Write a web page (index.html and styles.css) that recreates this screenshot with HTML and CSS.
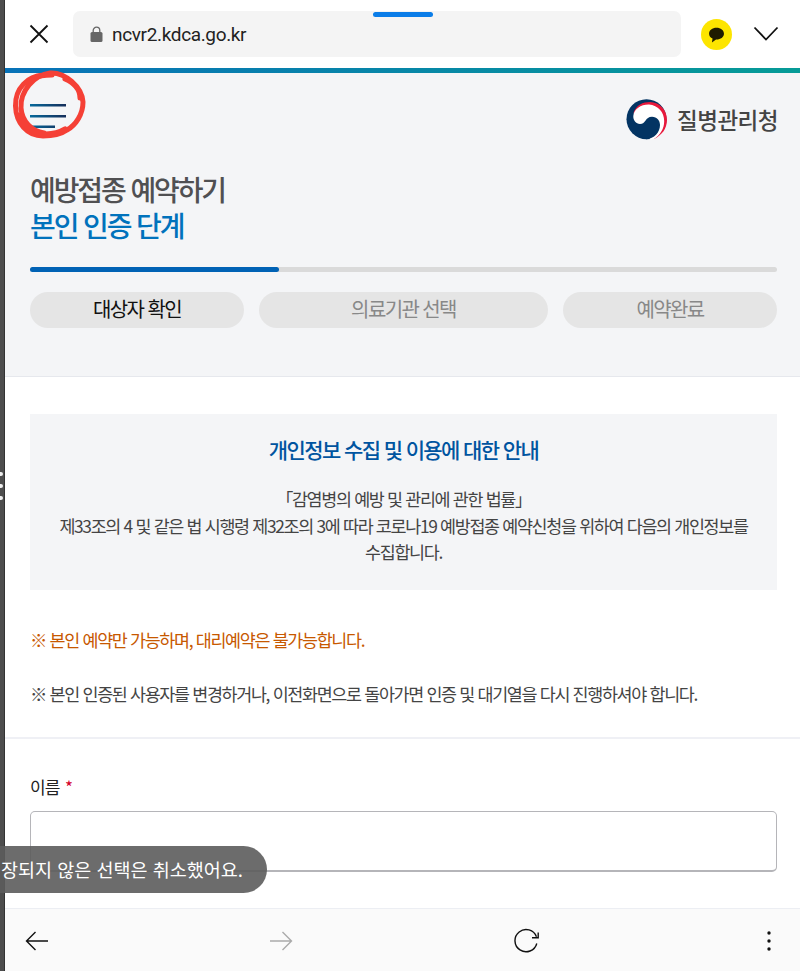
FILE: index.html
```
<!DOCTYPE html>
<html lang="ko">
<head>
    <meta charset="UTF-8">
    <meta name="viewport" content="width=device-width, initial-scale=1.0">
    <title>예방접종 예약하기</title>
    <link rel="stylesheet" href="styles.css">
</head>
<body>
    <div class="split-handle">
        <span></span>
        <span></span>
        <span></span>
    </div>

    <div class="browser">
        <header class="address-bar">
            <div class="sheet-handle"></div>
            <svg class="icon-close" width="20" height="20" viewBox="0 0 20 20"><path d="M1.5 1.5L18.5 18.5M18.5 1.5L1.5 18.5"/></svg>
            <div class="url">
                <svg width="13" height="17" viewBox="0 0 13 17">
                    <path d="M3.2 7V4.5a3.300 3.300 0 0 1 6.600 0V7" fill="none" stroke="#666" stroke-width="1.3"/>
                    <rect x="0.5" y="6" width="12" height="10" rx="1.5" fill="#666"/>
                </svg>
                <span>ncvr2.kdca.go.kr</span>
            </div>
            <svg class="icon-talk" width="31" height="31" viewBox="0 0 32 32">
                <circle cx="16" cy="16" r="16" fill="#fde500"/>
                <path d="M16 9c-4.300 0-7.700 2.700-7.700 6.100 0 2.200 1.500 4.100 3.600 5.100l-.6 4 4.200-3.100c4.500.2 8.200-2.500 8.200-6 0-3.400-3.400-6.100-7.700-6.100z" fill="#1f1b00"/>
            </svg>
            <svg class="icon-down" width="26" height="16" viewBox="0 0 26 16"><path d="M1.5 1.5L13 13.5L24.5 1.5"/></svg>
        </header>

        <section class="page-head">
            <div class="brand-row">
                <svg class="menu" width="38" height="26" viewBox="0 0 38 26">
                    <defs>
                        <linearGradient id="menuLine" gradientUnits="userSpaceOnUse" x1="0" y1="0" x2="37" y2="0">
                            <stop offset="0" stop-color="#07699b"/>
                            <stop offset="1" stop-color="#152c58"/>
                        </linearGradient>
                    </defs>
                    <path d="M0 2h36v2.400H0zM0 13h36v2.400H0zM0 23.600h25v2.400H0z" fill="url(#menuLine)"/>
                </svg>
                <div class="brand">
                    <svg width="42" height="41" viewBox="0 0 42 41">
                        <circle cx="20.5" cy="20.2" r="20" fill="#033463"/>
                        <path d="M7.500 14C10 6 17 3 24 3C34 3.500 41 11 41 21C40.700 30 36 36 28 40L20 28z" fill="#e8193c"/>
                        <path d="M7.300 17C8 10 15 5.300 23 5.500C32 6.300 38.200 13 38.200 22C38.200 30 34 36 28 40L24 40.500L20 30L14 25C10 25 7 21 7.300 17z" fill="#fff"/>
                        <path d="M14 25C20 25 19 17.700 26 17.700C31 17.700 34 21.500 34 26C34 33.500 28 39.600 20.500 40.200L10 34z" fill="#033463"/>
                    </svg>
                    <span>질병관리청</span>
                </div>
            </div>

            <h1>예방접종 예약하기<br><em>본인 인증 단계</em></h1>

            <div class="progress"><div class="progress-fill"></div></div>
            <ol class="steps">
                <li class="active">대상자 확인</li>
                <li>의료기관 선택</li>
                <li>예약완료</li>
            </ol>
        </section>

        <section class="notice">
            <div class="notice-box">
                <h2>개인정보 수집 및 이용에 대한 안내</h2>
                <p>「감염병의 예방 및 관리에 관한 법률」<br>제33조의 4 및 같은 법 시행령 제32조의 3에 따라 코로나19 예방접종 예약신청을 위하여 다음의 개인정보를<br>수집합니다.</p>
            </div>
            <p class="warning">※ 본인 예약만 가능하며, 대리예약은 불가능합니다.</p>
            <p>※ 본인 인증된 사용자를 변경하거나, 이전화면으로 돌아가면 인증 및 대기열을 다시 진행하셔야 합니다.</p>
        </section>

        <form class="form">
            <label for="name">이름 <span>*</span></label>
            <input type="text" id="name">
        </form>

        <nav class="toolbar">
            <svg width="24" height="20" viewBox="0 0 24 20"><path d="M23 10H1.500M10.500 1L1.500 10L10.500 19"/></svg>
            <svg class="disabled" width="24" height="20" viewBox="0 0 24 20"><path d="M1 10H22.500M13.500 1L22.500 10L13.500 19"/></svg>
            <svg width="26" height="26" viewBox="0 0 26 26"><path d="M22.800 15.500A11.100 11.100 0 1 1 22.500 8.800M24.200 4.500V9.800H18"/></svg>
            <svg width="18" height="20" viewBox="0 0 18 20" class="more"><circle cx="9" cy="2" r="1.700"/><circle cx="9" cy="10" r="1.700"/><circle cx="9" cy="18" r="1.700"/></svg>
        </nav>
    </div>

    <!-- hand-drawn mark around the menu button -->
    <svg class="marker" width="80" height="75" viewBox="10 68 80 75">
        <path d="M43 75C28 76 15 88 15.500 106C16 123 27 136 43 136C50 136 60 135 67 130C76 125 83 114 83 102C82 87 65 72 50 73C34 75 20 91 21 108C22 122 32 131 44 133"/>
        <path d="M80 98C80 90 74 83 65 79M19 115C25 129 34 134 46 134C54 134 60 132 65 129M34 78C40 75 46 75 52 75"/>
    </svg>

    <div class="toast">장되지 않은 선택은 취소했어요.</div>
</body>
</html>
```
FILE: styles.css
```
* {
    box-sizing: border-box;
}
body {
    margin: 0;
    height: 971px;
    display: flex;
    position: relative;
    overflow: hidden;
    background-color: #fff;
    color: #444;
    font-family: "Noto Sans CJK KR", sans-serif;
}
h1, h2, p, ol {
    margin: 0;
    padding: 0;
}
svg {
    display: block;
    flex: none;
}
.split-handle {
    width: 5px;
    flex: none;
    background-color: #4d4d4d;
    border-right: 1px solid #333;
    display: flex;
    flex-direction: column;
    justify-content: center;
    gap: 8px;
}
.split-handle span {
    width: 3px;
    height: 4px;
    border-radius: 0 2px 2px 0;
    background-color: #eee;
}
.browser {
    flex: 1;
    min-width: 0;
    display: flex;
    flex-direction: column;
}

/* address bar */
.address-bar {
    position: relative;
    height: 68px;
    flex: none;
    display: flex;
    align-items: center;
    padding: 0 21px 0 24px;
}
.sheet-handle {
    position: absolute;
    top: 12px;
    left: 368px;
    width: 60px;
    height: 5px;
    border-radius: 3px;
    background-color: #0b7de8;
}
.icon-close, .icon-down {
    fill: none;
    stroke: #111;
    stroke-width: 1.8;
}
.url {
    flex: 1;
    height: 46px;
    margin: 0 20px 0 24px;
    padding-left: 17px;
    display: flex;
    align-items: center;
    gap: 9px;
    border-radius: 7px;
    background-color: #f4f4f4;
    color: #222;
    font-family: Roboto, sans-serif;
    font-size: 19px;
    letter-spacing: -0.35px;
}
.icon-talk {
    margin-right: 21px;
}

/* page header */
.page-head {
    position: relative;
    height: 309px;
    flex: none;
    padding: 26px 23px 0 25px;
    background-color: #f4f5f7;
    border-bottom: 1px solid #e6e8ed;
}
.page-head::before {
    content: "";
    position: absolute;
    top: 0;
    left: 0;
    width: 100%;
    height: 5px;
    background: linear-gradient(to right, #0872b8, #069b97);
}
.brand-row {
    display: flex;
    justify-content: space-between;
    height: 77px;
}
.menu {
    margin-top: 8px;
}
.brand {
    display: flex;
    align-items: center;
    gap: 9px;
    height: 50px;
    font-size: 22.5px;
    font-weight: 500;
    letter-spacing: -0.5px;
}
.brand span {
    margin-right: -1px;
    padding-bottom: 1px;
}
h1 {
    font-size: 28px;
    font-weight: 500;
    line-height: 36px;
    letter-spacing: -2.1px;
    color: #505052;
}
h1 em {
    font-style: normal;
    color: #0072bc;
}
.progress {
    height: 5px;
    margin-top: 24px;
    border-radius: 3px;
    background-color: #dadada;
}
.progress-fill {
    width: 249px;
    height: 5px;
    border-radius: 3px;
    background-color: #0062b5;
}
.steps {
    list-style: none;
    display: flex;
    gap: 15px;
    margin-top: 20px;
}
.steps li {
    width: 214px;
    height: 36px;
    border-radius: 18px;
    background-color: #e5e5e5;
    color: #888;
    font-size: 20px;
    line-height: 34px;
    letter-spacing: -1.6px;
    text-align: center;
}
.steps li:nth-child(2) {
    flex: 1;
}
.steps .active {
    color: #111;
}

/* notice */
.notice {
    height: 362px;
    flex: none;
    padding: 37px 23px 0 25px;
    border-bottom: 2px solid #eff0f5;
    font-size: 17.4px;
    line-height: 26.5px;
    letter-spacing: -1.33px;
}
.notice-box {
    height: 176px;
    margin-bottom: 37px;
    padding-top: 20px;
    background-color: #f4f5f7;
    text-align: center;
}
.notice-box h2 {
    margin-bottom: 22px;
    color: #0054a0;
    font-size: 21px;
    font-weight: 500;
    line-height: 30px;
    letter-spacing: -1.6px;
}
.notice-box p {
    white-space: nowrap;
}
.notice .warning {
    margin-bottom: 27px;
    color: #c75800;
}

/* form */
.form {
    flex: 1;
    padding: 35px 23px 0 25px;
}
.form label {
    display: block;
    height: 37px;
    color: #222;
    font-size: 17px;
    line-height: 26px;
    letter-spacing: -1px;
}
.form label span {
    margin-left: 2px;
    color: #d4002a;
}
.form input {
    display: block;
    width: 100%;
    height: 61px;
    border: 1px solid #b5b5b9;
    border-bottom-width: 2px;
    border-radius: 5px;
}

/* bottom toolbar */
.toolbar {
    height: 63px;
    flex: none;
    display: flex;
    align-items: center;
    justify-content: space-between;
    padding: 1px 22px 0 20px;
    background-color: #fafafa;
    border-top: 1px solid #eceef3;
}
.toolbar svg {
    fill: none;
    stroke: #111;
    stroke-width: 1.4;
}
.toolbar .disabled {
    stroke: #aaa;
}
.toolbar .more {
    fill: #111;
    stroke: none;
}

/* overlays */
.marker {
    position: absolute;
    top: 68px;
    left: 10px;
    fill: none;
    stroke: #f54036;
    stroke-width: 5;
    stroke-linecap: round;
    stroke-linejoin: round;
}
.toast {
    position: absolute;
    top: 846px;
    left: 0;
    width: 267px;
    height: 47px;
    padding-left: 1px;
    border-radius: 0 24px 24px 0;
    background-color: rgba(92, 92, 92, 0.9);
    color: #fff;
    font-size: 18.5px;
    line-height: 46px;
    white-space: nowrap;
}
```
